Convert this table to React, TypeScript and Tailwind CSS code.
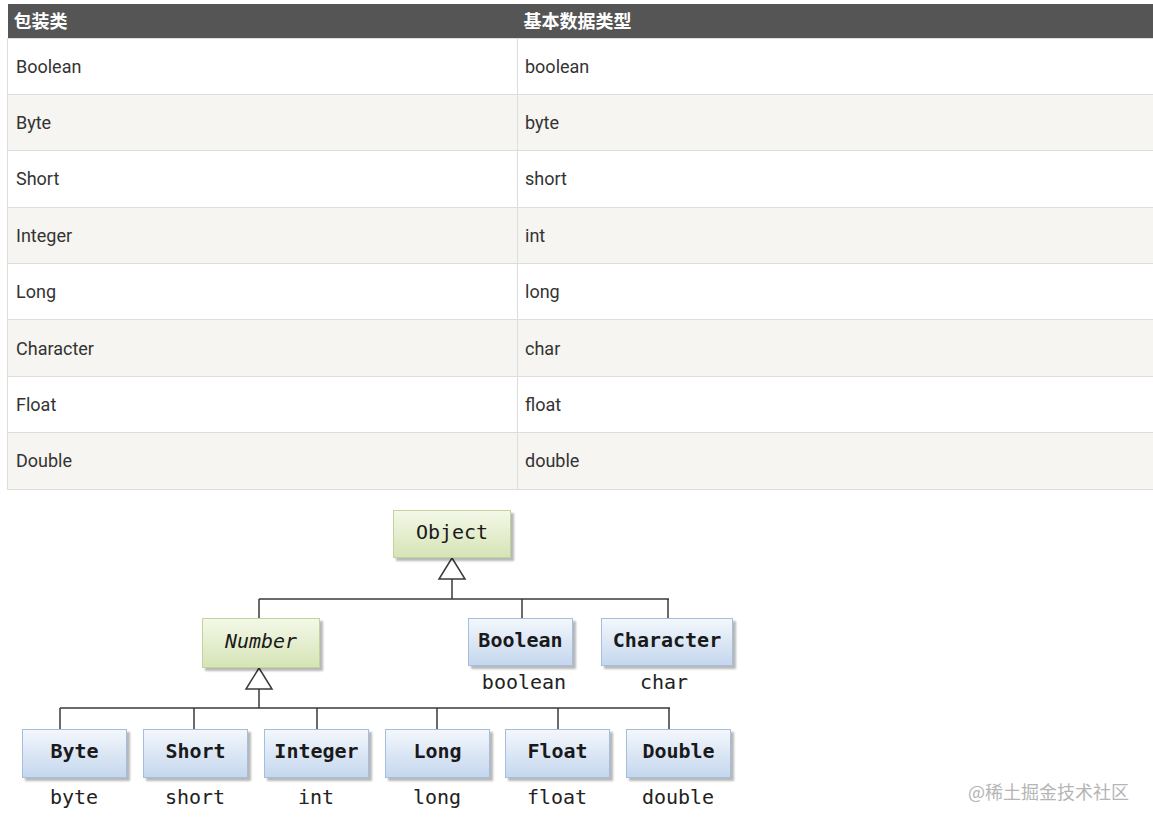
import React from 'react';

const rows = [
  ['Boolean', 'boolean'],
  ['Byte', 'byte'],
  ['Short', 'short'],
  ['Integer', 'int'],
  ['Long', 'long'],
  ['Character', 'char'],
  ['Float', 'float'],
  ['Double', 'double'],
];

type NodeProps = {
  label: string;
  left: number;
  top: number;
  width: number;
  height: number;
  kind: 'green' | 'blue';
  italic?: boolean;
};

// class nodes of the hierarchy diagram, placed on the diagram canvas
const DiagramNode: React.FC<NodeProps> = ({ label, left, top, width, height, kind, italic }) => (
  <div
    className={
      'absolute flex items-center justify-center border pb-[4px] text-[20px] text-[#1a1a1a] shadow-[3px_3px_2px_rgba(0,0,0,0.28)] ' +
      (kind === 'green'
        ? 'border-[#c3d39c] bg-gradient-to-b from-[#f4f8e8] to-[#d6e4b6] '
        : 'border-[#a3bedf] bg-gradient-to-b from-[#f3f7fc] to-[#c5d7ee] font-bold ') +
      (italic ? 'italic' : '')
    }
    style={{ left, top, width, height, fontFamily: '"DejaVu Sans Mono", monospace' }}
  >
    {label}
  </div>
);

const Caption: React.FC<{ text: string; center: number; top: number }> = ({ text, center, top }) => (
  <div
    className="absolute w-[120px] text-center text-[20px] leading-[24px] text-[#222]"
    style={{ left: center - 60, top, fontFamily: '"DejaVu Sans Mono", monospace' }}
  >
    {text}
  </div>
);

const bottomNodes = [
  { label: 'Byte', left: 22, tick: 60, caption: 'byte' },
  { label: 'Short', left: 143, tick: 194, caption: 'short' },
  { label: 'Integer', left: 264, tick: 317, caption: 'int' },
  { label: 'Long', left: 385, tick: 437, caption: 'long' },
  { label: 'Float', left: 505, tick: 558, caption: 'float' },
  { label: 'Double', left: 626, tick: 669, caption: 'double' },
];

const App: React.FC = () => {
  return (
    <div className="relative w-[1153px] h-[825px] overflow-hidden bg-white pt-[4px]">
      <table
        className="ml-[7px] w-[1148px] table-fixed border-collapse text-[18px] text-[#333]"
        style={{ fontFamily: 'Roboto, "Noto Sans CJK SC", sans-serif' }}
      >
        <thead>
          <tr className="h-[34px] bg-[#555555] text-left text-white">
            <th className="w-[510px] pl-[6px] text-[18px] font-bold" style={{ fontFamily: '"Noto Sans CJK SC", sans-serif' }}>
              包装类
            </th>
            <th className="pl-[6px] text-[18px] font-bold" style={{ fontFamily: '"Noto Sans CJK SC", sans-serif' }}>
              基本数据类型
            </th>
          </tr>
        </thead>
        <tbody>
          {rows.map(([a, b], i) => (
            <tr key={a} className={'h-[56.4px] ' + (i % 2 === 1 ? 'bg-[#f6f5f1]' : 'bg-white')}>
              <td className="border border-[#dddddd] pl-[8px]">{a}</td>
              <td className="border border-[#dddddd] pl-[7px]">{b}</td>
            </tr>
          ))}
        </tbody>
      </table>

      <div className="relative h-[332px]">
        <svg className="absolute inset-0" width="1153" height="332" fill="none" stroke="#3a3a3a" strokeWidth="1.5">
          <path d="M452 89 V109 M259 109 H669 M259 109 V128 M522 109 V128 M668 109 V128" />
          <polygon points="452,68 439,89 465,89" fill="#fff" />
          <path d="M259 199 V218 M60 218 H670 M60 218 V239 M194 218 V239 M317 218 V239 M437 218 V239 M558 218 V239 M669 218 V239" />
          <polygon points="259,178 246,199 272,199" fill="#fff" />
        </svg>

        <DiagramNode label="Object" left={393} top={20} width={118} height={48} kind="green" />
        <DiagramNode label="Number" left={202} top={128} width={118} height={50} kind="green" italic />
        <DiagramNode label="Boolean" left={468} top={128} width={105} height={48} kind="blue" />
        <DiagramNode label="Character" left={601} top={128} width={132} height={48} kind="blue" />
        <Caption text="boolean" center={524} top={180} />
        <Caption text="char" center={664} top={180} />

        {bottomNodes.map(n => (
          <React.Fragment key={n.label}>
            <DiagramNode label={n.label} left={n.left} top={239} width={105} height={49} kind="blue" />
            <Caption text={n.caption} center={n.left + 52} top={295} />
          </React.Fragment>
        ))}
      </div>

      <div
        className="absolute left-[968px] top-[779px] text-[18px] leading-[24px] text-[#b5b5b5]"
        style={{ fontFamily: '"Noto Sans CJK SC", sans-serif' }}
      >
        @稀土掘金技术社区
      </div>
    </div>
  );
};

export default App;
